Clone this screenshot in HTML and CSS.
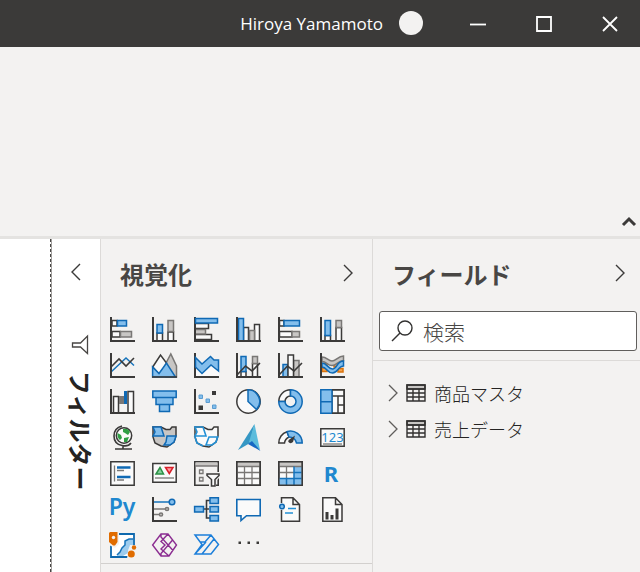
FILE: index.html
```html
<!DOCTYPE html>
<html lang="ja">
<head>
<meta charset="utf-8">
<title>Power BI Desktop</title>
<link rel="stylesheet" href="styles.css">
</head>
<body>
<header class="titlebar">
  <span class="user">Hiroya Yamamoto</span>
  <span class="avatar"></span>
  <button class="winbtn" aria-label="最小化"><svg width="16" height="16"><path d="M0 8.500H16"/></svg></button>
  <button class="winbtn" aria-label="最大化"><svg width="16" height="16"><path d="M1 1H15V15H1Z"/></svg></button>
  <button class="winbtn" aria-label="閉じる"><svg width="16" height="16"><path d="M1 1L15 15M15 1L1 15"/></svg></button>
</header>
<div class="ribbon">
  <button class="collapse" aria-label="リボンを折りたたむ"><svg width="14" height="10"><path d="M1 8L7 2L13 8"/></svg></button>
</div>
<main class="workspace">
  <div class="canvas"></div>
  <aside class="filters">
    <button class="chev" aria-label="フィルターを開く"><svg width="12" height="18"><path d="M10 1L2 9L10 17"/></svg></button>
    <svg class="funnel" width="18" height="20"><path d="M16.500 1V18.500L9.500 12H1.500V8H9.500Z"/></svg>
    <h2 class="vertical">フィルター</h2>
  </aside>
  <section class="visuals">
    <div class="head">
      <h2>視覚化</h2>
      <button class="chev" aria-label="視覚化を閉じる"><svg width="12" height="18"><path d="M2 1L10 9L2 17"/></svg></button>
    </div>
    <div class="gallery">
      <button aria-label="積み上げ横棒"><svg viewBox="0 0 25 25"><path class="w" d="M2 3.500H7V9H2ZM2 14.500H10V20H2Z"/><path class="b" d="M7.500 3.500H16.500V9H7.500Z"/><path class="g" d="M10.500 14.500H21.500V20H10.500Z"/><path class="ax" d="M1 0V24H25"/></svg></button>
      <button aria-label="積み上げ縦棒"><svg viewBox="0 0 25 25"><path class="w" d="M5 16H10.500V24H5ZM16 15H21.500V24H16Z"/><path class="b" d="M5 7.500H10.500V16H5Z"/><path class="g" d="M16 3.500H21.500V14.500H16Z"/><path class="ax" d="M1 0V24H25"/></svg></button>
      <button aria-label="集合横棒"><svg viewBox="0 0 25 25"><path class="w" d="M1 6.500H14.500V11.500H1ZM1 17.500H17.500V22.500H1Z"/><path class="g" d="M1 12.500H11.500V17H1Z"/><path class="ax" d="M1 0V24H25"/><path class="b" d="M1.500 1.500H23.500V6H1.500Z"/></svg></button>
      <button aria-label="集合縦棒"><svg viewBox="0 0 25 25"><path class="w" d="M7.500 10.500H12.500V24H7.500ZM18.500 7.500H23.500V24H18.500Z"/><path class="g" d="M13.500 13.500H18.500V24H13.500Z"/><path class="b" d="M2.500 1.500H7.500V24H2.500Z"/><path class="ax" d="M1 0V24H25"/></svg></button>
      <button aria-label="100% 積み上げ横棒"><svg viewBox="0 0 25 25"><path class="w" d="M1.500 3.500H6V9H1.500ZM1.500 14.500H14V20H1.500Z"/><path class="b" d="M6 3.500H21.500V9H6Z"/><path class="g" d="M14 14.500H21.500V20H14Z"/><path class="ax" d="M1 0V24H25"/></svg></button>
      <button aria-label="100% 積み上げ縦棒"><svg viewBox="0 0 25 25"><path class="w" d="M5 18.500H10.500V24H5ZM16 10.500H21.500V24H16Z"/><path class="b" d="M5 3.500H10.500V18.500H5Z"/><path class="g" d="M16 3.500H21.500V10.500H16Z"/><path class="ax" d="M1 0V24H25"/></svg></button>

      <button aria-label="折れ線"><svg viewBox="0 0 25 25"><path class="bl" d="M1 19L16 5L24 12.500"/><path class="dl" d="M1 14L9 6L16 13L24 5"/><path class="ax" d="M1 0V24H25"/></svg></button>
      <button aria-label="面"><svg viewBox="0 0 25 25"><path class="g" d="M13 12L18.800 1L24.500 13V24H14Z"/><path class="w" d="M.7 14L8.500 2L14.500 10L8 22Z"/><path class="b" d="M.6 14L7 20.500L14.500 10L23.500 24H.6Z"/><path class="dl" d="M0 24H25"/></svg></button>
      <button aria-label="積み上げ面"><svg viewBox="0 0 25 25"><path class="wf" d="M1 12L8 20L17 12L25 17V24H1Z"/><path class="ax" d="M1 0V24H25"/><path class="b" d="M1.500 4.500L8 11L16.500 3.500L20 7H24.500V18L17 12L8 20.500L1.500 14Z"/></svg></button>
      <button aria-label="折れ線と積み上げ縦棒"><svg viewBox="0 0 25 25"><path class="w" d="M5 18.500H10V24H5ZM16.500 10.500H21.500V24H16.500Z"/><path class="b" d="M5 3.500H10V18.500H5Z"/><path class="g" d="M16.500 3.500H21.500V10.500H16.500Z"/><path class="ax" d="M1 0V24H25"/><path class="dl" d="M1 22L9.500 13L16 18L24 10"/></svg></button>
      <button aria-label="折れ線と集合縦棒"><svg viewBox="0 0 25 25"><path class="b" d="M5 11.500H10V24H5Z"/><path class="g" d="M15.500 7.500H21V24H15.500Z"/><path class="w" d="M10 2H15.500V24H10Z"/><path class="ax" d="M1 0V24H25"/><path class="dl" d="M1 22L9.500 13L16 18L24 10"/></svg></button>
      <button aria-label="リボン"><svg viewBox="0 0 25 25"><path class="orange" d="M2 10.500H7V14H2ZM2 15H7V18.500H2ZM14 10.500H19V14H14ZM18 15.500H23V19H18Z"/><path class="g" d="M2 4C7 4 8 8 12 8S18 3 23.500 3V7.500C18 7.500 17 12.500 12 12.500S7 8.500 2 8.500Z"/><path class="b" d="M2 10C7 10 8 16 12.500 16S17 8 23.500 8V13C18 13 18 20 12.500 20S7 14 2 14Z"/><path class="ax" d="M1 0V24H25"/></svg></button>

      <button aria-label="ウォーターフォール"><svg viewBox="0 0 25 25"><path class="w" d="M3.500 7.500H8.500V24H3.500ZM18 2.500H23.500V24H18Z"/><path class="gs" d="M9 7H14V15H9Z"/><path class="bs" d="M14 2H17V15H14Z"/><path class="ax" d="M1 0V24H25"/></svg></button>
      <button aria-label="じょうご"><svg viewBox="0 0 25 25"><path class="b" d="M.8 2H24.200V8.500H.8ZM4 8.500H21V15.500H4ZM7.500 15.500H17.500V22.500H7.500Z"/></svg></button>
      <button aria-label="散布図"><svg viewBox="0 0 25 25"><path class="b thin" d="M5 6H8.500V9.500H5ZM12 10H15.500V13.500H12ZM18.500 16H22V19.500H18.500Z"/><path class="df" d="M18 2H22V6H18ZM4.500 16.500H9V21H4.500Z"/><path class="ax" d="M1 0V24H25"/></svg></button>
      <button aria-label="円"><svg viewBox="0 0 25 25"><circle class="w" cx="12.500" cy="12.500" r="11.700"/><path class="b" d="M12 .8A11.700 11.700 0 0 1 20.500 20.500L12 12.500Z"/></svg></button>
      <button aria-label="ドーナツ"><svg viewBox="0 0 25 25"><path class="w" d="M.8 12.500A11.700 11.700 0 0 1 12.500 .8V7A5.500 5.500 0 0 0 7 12.500Z"/><path class="b" d="M12.500 .8A11.700 11.700 0 1 1 .8 12.500H7A5.500 5.500 0 1 0 12.500 7Z"/></svg></button>
      <button aria-label="ツリーマップ"><svg viewBox="0 0 25 25"><path class="w" d="M12 .8H24.200V24.200H12ZM12 7H24M18 7V24M18 16H24"/><path class="b" d="M.8 .8H12V12.700H.8ZM.8 12.700H12V24.200H.8Z"/><path class="dl" d="M12 .8H24.200V24.200H12"/></svg></button>

      <button aria-label="マップ"><svg viewBox="0 0 25 25"><circle class="w" cx="14" cy="10.500" r="7.700"/><path class="green" d="M13 4Q18 3 20 7L18 10L15 8L13 7ZM7.500 8L11 10L12 13L10 15Q7 13 7.500 8ZM14 13L19 12L17 17L14 17Z"/><path class="dl" d="M12 1Q4 3 4 11T12 20.500Q18 22 21 18M13 20V24M5 24H22"/></svg></button>
      <button aria-label="塗り分け地図"><svg viewBox="0 0 25 25"><path class="g dk" d="M1 2H9L14 4.500H18L20 2H24V11L22 17L18 20L15 22L9 21L3 18L1 12Z"/><path class="b" d="M1 2H9L12 11H1L3 7ZM15 11H24L22 17L18 20H12L14 17Z"/></svg></button>
      <button aria-label="図形マップ"><svg viewBox="0 0 25 25"><path class="w" d="M1 2H9L14 4.500H18L20 2H24V11L22 17L18 20L15 22L9 21L3 18L1 12Z"/><path class="sky" d="M24 11L22 17L18 20H12L15 12H24M9 2H1L3 7L1 11H12L9 2"/><path class="sky" d="M1 12L3 18L9 21"/></svg></button>
      <button aria-label="Azure マップ"><svg viewBox="0 0 25 25"><path fill="#3597c4" d="M18.500 -1L2 25L14 18Z"/><path fill="#5bbcdc" d="M18.500 -1L13 17L24 25Z"/><path fill="#1668c4" d="M16 16L24.500 26L12 19Z"/></svg></button>
      <button aria-label="ゲージ"><svg viewBox="0 0 25 25"><path class="w" d="M.8 18A11.700 11.700 0 0 1 9 6.700L11 12Q7 14 6.500 18Z"/><path class="b" d="M9 6.700A11.700 11.700 0 0 1 24.200 18H18.500Q17 12 11 12Z"/><path class="df" d="M17 10.500L15 17Q13 19 11 17.500T12 14Z"/></svg></button>
      <button aria-label="カード"><svg viewBox="0 0 25 25"><path class="w" d="M.8 3.800H24.200V21.200H.8Z"/><text class="num" x="12.500" y="16.500">123</text><path class="gl" d="M3 19H22"/></svg></button>

      <button aria-label="複数の行カード"><svg viewBox="0 0 25 25"><path class="w" d="M.8 .8H24.200V24.200H.8Z"/><path class="gl" d="M4.500 4.500V20.500M7 9.500H14M7 19H14"/><path class="deep" d="M7 6.500H20.500M7 16H20.500"/></svg></button>
      <button aria-label="KPI"><svg viewBox="0 0 25 25"><path class="w" d="M.8 2.500H24.200V21.200H.8Z"/><path class="up" d="M4 13L8 6.500L11.500 13Z"/><path class="down" d="M13.500 6.500H21L17.300 12.500Z"/><path class="gl" d="M3 17H22"/></svg></button>
      <button aria-label="スライサー"><svg viewBox="0 0 25 25"><path class="dl" d="M.8 .8H24.200V24.200H.8Z"/><path class="gf" d="M1.500 1.500H23.500V5H1.500Z"/><path class="gl" d="M1 5H24M5.500 9H9V12.500H5.500ZM5.500 16.500H9V20H5.500Z"/><path class="halo" d="M12 11H26V16L22 20V26H15V20L12 16Z"/><path class="w" d="M13 13H25V14.500L21 18.500V25H17.500V18.500L13 14.500Z"/></svg></button>
      <button aria-label="テーブル"><svg viewBox="0 0 25 25"><path class="w" d="M.8 .8H24.200V24.200H.8Z"/><path class="gf" d="M1.500 1.500H23.500V5H1.500Z"/><path class="gl" d="M1.500 5.500H23.500M1.500 11.500H23.500M1.500 17.500H23.500M8.500 5V24M16 5V24"/><path class="dl" d="M.8 .8H24.200V24.200H.8Z"/></svg></button>
      <button aria-label="マトリックス"><svg viewBox="0 0 25 25"><path class="w" d="M.8 .8H24.200V24.200H.8Z"/><path class="gf" d="M1.500 1.500H23.500V5H1.500Z"/><path class="bf" d="M16 5.500H24V24H1V17.500H16Z"/><path class="gl" d="M1.500 5.500H23.500M1.500 11.500H16M8.500 5V17"/><path class="bl" d="M1.500 17.500H23.500M16 5.500V24M16 11.500H23.500M8.500 17.500V24"/><path class="dl" d="M.8 .8H24.200V24.200H.8Z"/></svg></button>
      <button aria-label="R スクリプト"><svg viewBox="0 0 25 25"><text class="lang" x="11" y="21">R</text></svg></button>

      <button aria-label="Python"><svg viewBox="0 0 25 25"><text class="lang py" x="12" y="18">Py</text></svg></button>
      <button aria-label="主要なインフルエンサー"><svg viewBox="0 0 25 25"><path class="bl" d="M2 5H17"/><circle class="b" cx="20" cy="5" r="2.800"/><path class="gl" d="M2 12H13M2 17.500H7"/><circle class="g" cx="15" cy="12" r="1.600"/><circle class="g" cx="9" cy="17.500" r="1.600"/><path class="ax" d="M1 0V24H25"/></svg></button>
      <button aria-label="分解ツリー"><svg viewBox="0 0 25 25"><path class="dl" d="M10 12H15M16 3.500H12.500V21H16"/><path class="b" d="M.6 9.500H9.500V15H.6ZM16 .8H24.400V6.500H16ZM16 9.500H24.400V15H16ZM16 18.500H24.400V24H16Z"/></svg></button>
      <button aria-label="Q&amp;A"><svg viewBox="0 0 25 25"><path class="w deepline" d="M.8 2.500H24.200V18.700H10.500L5 23.500V18.700H.8Z"/></svg></button>
      <button aria-label="ページ分割されたレポート"><svg viewBox="0 0 25 25"><path class="w" d="M3.500 .8H15L21.500 7.500V24.200H3.500ZM15 .8V7.500H21.500"/><path class="halo" d="M1 6H7V13H1Z"/><circle class="b" cx="4" cy="9.500" r="2.300"/><path class="sky" d="M10 11.500H18M7 16H15"/></svg></button>
      <button aria-label="スマート説明"><svg viewBox="0 0 25 25"><path class="w" d="M2.800 .8H15.500L22 7.500V24.200H2.800ZM15.500 .8V7.500H22"/><path class="df" d="M5.500 15H8.500V22.500H5.500ZM10.500 18H13.500V22.500H10.500ZM15.500 11.500H18.500V22.500H15.500Z"/></svg></button>

      <button aria-label="ArcGIS"><svg viewBox="0 0 25 25"><path fill="#fff" stroke="#0f69ae" stroke-width="1.800" d="M1 1H24V24H1Z"/><path fill="#9dccee" d="M23 6V12L19 15L18 20L13 23H7L10 19L12 15L15 12V8L19 6Z"/><path class="bl" d="M23 6H19L15 8V12L12 15L10 19L7 22"/><path class="halo" d="M-2 -2H9V11L5 15L-1 12ZM18 18L20 12H26V26H17Z"/><path fill="#e06c00" d="M0 -1H7.500V9L5 12.500H3L-1 9V0Z"/><circle cx="3.500" cy="4.500" r="1.700" fill="#f3f2f1"/><circle cx="24" cy="14.500" r="2.200" fill="#e06c00"/><circle cx="21.300" cy="21" r="3.500" fill="#e06c00"/></svg></button>
      <button aria-label="Power Apps"><svg viewBox="0 0 25 25"><path class="purple" d="M9 1H16L24.500 12L17 23H9L.6 12ZM9 1V4L21 17.500M16 1L9 8.500L13 12L9 16L17 23M9 23V20.500L21 6.500"/></svg></button>
      <button aria-label="Power Automate"><svg viewBox="0 0 25 25"><path class="flow" d="M1 2H17L24.500 11.500L17 21H1L8 11.500ZM6 9H11L17 2M8 21L20 6M1 21L12 9"/></svg></button>
      <button aria-label="その他"><svg viewBox="0 0 25 25"><path class="df" d="M2.500 8.500H5V11H2.500ZM11.500 8.500H14V11H11.500ZM20.500 8.500H23V11H20.500Z"/></svg></button>
    </div>
  </section>
  <section class="fields">
    <div class="head">
      <h2>フィールド</h2>
      <button class="chev" aria-label="フィールドを閉じる"><svg width="12" height="18"><path d="M2 1L10 9L2 17"/></svg></button>
    </div>
    <label class="search">
      <svg width="22" height="22"><circle cx="14" cy="8" r="7"/><path d="M9 13L1 21"/></svg>
      <input type="search" placeholder="検索" aria-label="検索">
    </label>
    <ul class="tree">
      <li><button><svg class="arrow" width="12" height="18"><path d="M2 1L10 9L2 17"/></svg><svg class="table" width="20" height="18"><path class="top" d="M1 1H19V5H1Z"/><path d="M1 1H19V17H1ZM1 5H19M1 9H19M1 13H19M7 5V17M13 5V17"/></svg>商品マスタ</button></li>
      <li><button><svg class="arrow" width="12" height="18"><path d="M2 1L10 9L2 17"/></svg><svg class="table" width="20" height="18"><path class="top" d="M1 1H19V5H1Z"/><path d="M1 1H19V17H1ZM1 5H19M1 9H19M1 13H19M7 5V17M13 5V17"/></svg>売上データ</button></li>
    </ul>
  </section>
</main>
</body>
</html>
```
FILE: styles.css
```css
* { box-sizing: border-box; }
body {
  margin: 0;
  min-height: 100vh;
  display: flex;
  flex-direction: column;
  background: #f3f2f1;
  color: #252423;
  font-family: "Noto Sans", "Noto Sans CJK JP", sans-serif;
}
button { border: 0; padding: 0; background: none; color: inherit; font: inherit; }
svg { display: block; fill: none; overflow: visible; }
h2 { margin: 0; font-size: 24px; line-height: 32px; font-weight: 700; color: #484644; font-family: "Noto Sans CJK JP", sans-serif; }

.titlebar {
  display: flex;
  justify-content: flex-end;
  align-items: center;
  height: 47px;
  padding-right: 6px;
  background: #3b3a39;
  color: #fff;
}
.user { font-family: "Open Sans", sans-serif; font-size: 17px; line-height: 24px; }
.avatar { width: 24px; height: 24px; margin: 0 13px 2px 16px; border-radius: 50%; background: #f3f2f1; }
.winbtn { width: 66px; height: 47px; padding-left: 34px; }
.winbtn svg { stroke: #fff; stroke-width: 1.800; }

.ribbon {
  display: flex;
  justify-content: flex-end;
  align-items: flex-end;
  height: 192px;
  padding: 0 4px 9px;
  border-bottom: 3px solid #e4e3e1;
}
.collapse svg { stroke: #3b3a39; stroke-width: 3; }

.workspace { flex: 1; display: flex; align-items: stretch; }
.canvas { flex: 1; background: #fff; border-right: 1px dashed #484644; }
.filters {
  width: 49px;
  display: flex;
  flex-direction: column;
  align-items: center;
  padding-top: 24px;
  background: #fff;
  border-left: 1px solid #a19f9d;
}
.chev svg { stroke: #3b3a39; stroke-width: 1.400; }
.funnel { margin: 54px 0 16px 8px; stroke: #484644; stroke-width: 1.300; }
.vertical { margin-left: 10px; writing-mode: vertical-rl; text-orientation: sideways; color: #252423; }

.visuals { width: 272px; border-left: 1px solid #dcdad8; }
.fields { width: 268px; border-left: 1px solid #dcdad8; }
.head { display: flex; justify-content: space-between; align-items: center; height: 72px; padding: 0 17px 4px 19px; }
.visuals .head { padding-right: 18px; }
.fields .head { padding-right: 14px; }
.head h2 { padding-top: 2px; }
.gallery {
  display: grid;
  grid-template-columns: repeat(6, 42px);
  grid-template-rows: repeat(6, 36px) 30px;
  padding: 6px 0 0 9px;
  border-bottom: 1px solid #d2d0ce;
}
.gallery button { display: flex; }
.gallery svg { width: 25px; height: 25px; stroke-width: 1.500; }

.ax { stroke: #3b3a39; stroke-width: 2; }
.dl { stroke: #3b3a39; stroke-width: 1.600; }
.w { fill: #fafafa; stroke: #3b3a39; }
.wf { fill: #fafafa; }
.b { fill: #83beec; stroke: #0f69b4; }
.b.thin { stroke: #5b9cd0; stroke-width: 1; }
.bf { fill: #83beec; }
.bl { stroke: #1673ba; stroke-width: 1.500; }
.bs { fill: #0f69b4; }
.g { fill: #c8c6c4; stroke: #797775; }
.g.dk { stroke: #3b3a39; }
.gf { fill: #c8c6c4; }
.gs { fill: #797775; }
.gl { stroke: #797775; stroke-width: 1.300; }
.df { fill: #3b3a39; }
.deep { stroke: #0f69b4; stroke-width: 2.400; }
.deepline { stroke: #0f69b4; stroke-width: 1.600; }
.sky { stroke: #2391d6; stroke-width: 1.600; }
.orange { fill: #f5a14d; stroke: #d9730d; }
.green { fill: #2f9e44; }
.up { fill: #85cf9b; stroke: #2c9146; }
.down { fill: #ff9ba0; stroke: #d71f28; }
.halo { fill: #f3f2f1; }
.purple { stroke: #8b2d91; stroke-width: 1.400; }
.flow { stroke: #1c7fda; stroke-width: 1.500; }
.num { fill: #2088cf; font: 13px "Noto Sans", sans-serif; text-anchor: middle; }
.lang { fill: #2088cf; font: 700 22px "Noto Sans", sans-serif; text-anchor: middle; }
.lang.py { font-weight: 600; font-size: 23px; }

.search {
  display: flex;
  align-items: center;
  height: 40px;
  margin: 0 3px 0 6px;
  padding: 0 11px;
  gap: 10px;
  background: #fff;
  border: 1px solid #605e5c;
  border-radius: 3px;
}
.search svg { flex: none; stroke: #323130; stroke-width: 1.400; }
.search input { flex: 1; min-width: 0; border: 0; padding: 0; outline: 0; background: none; font: 300 21px "Noto Sans CJK JP", sans-serif; }
.search input::placeholder { color: #484644; opacity: 1; }
.tree { list-style: none; margin: 9px 0 0; padding: 14px 0 0 14px; border-top: 1px solid #dcdad8; }
.tree button { display: flex; align-items: center; height: 36px; font-family: "Noto Sans CJK JP", sans-serif; font-size: 18px; font-weight: 300; }
.arrow { stroke: #605e5c; stroke-width: 1.300; }
.table { margin: 0 8px 0 7px; stroke: #323130; stroke-width: 1.400; }
.table .top { fill: #c8c6c4; }
```
